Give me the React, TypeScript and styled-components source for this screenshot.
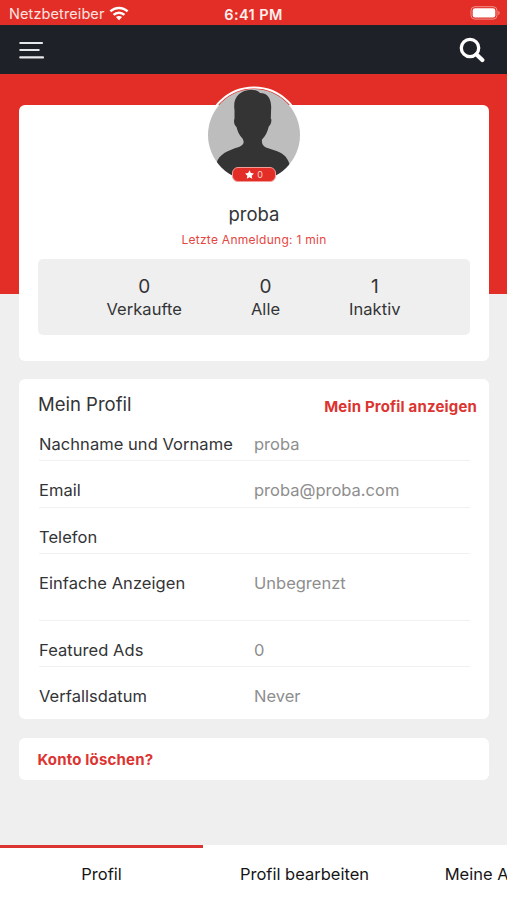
import React from "react";
import styled, { createGlobalStyle } from "styled-components";

const RED = "#e32e27";
const INK = "#333436";

const GlobalStyle = createGlobalStyle`
  * { box-sizing: border-box; }
  body { margin: 0; background: #efefef; }
`;

const Screen = styled.div`
  width: 507px;
  height: 900px;
  display: flex;
  flex-direction: column;
  overflow: hidden;
  background: #efefef;
  color: ${INK};
  font-family: Inter, "Liberation Sans", sans-serif;
`;

const Label = styled.span<{ $size: number; $spacing?: number; $weight?: number; $color?: string }>`
  font-size: ${(p) => p.$size}px;
  letter-spacing: ${(p) => p.$spacing ?? 0}px;
  font-weight: ${(p) => p.$weight ?? 400};
  color: ${(p) => p.$color ?? "inherit"};
  white-space: nowrap;
`;

const StatusBar = styled.header`
  flex: none;
  height: 25px;
  padding: 2px 6px 0 9px;
  display: grid;
  grid-template-columns: 1fr auto 1fr;
  align-items: center;
  background: ${RED};
`;

const Carrier = styled.div`
  display: flex;
  align-items: center;
  gap: 5px;
`;

const Clock = styled.div`
  margin-left: -3px;
`;

const BatterySlot = styled.div`
  display: flex;
  justify-content: flex-end;
  padding-bottom: 1px;
`;

const NavBar = styled.nav`
  flex: none;
  height: 49px;
  padding: 0 22px 0 18px;
  display: flex;
  align-items: center;
  justify-content: space-between;
  background: #1e2128;
`;

const IconButton = styled.button`
  display: flex;
  padding: 0;
  border: 0;
  background: none;
`;

const Content = styled.main`
  flex: 1;
  min-height: 0;
  padding: 31px 18px 0 19px;
  display: flex;
  flex-direction: column;
  background: linear-gradient(${RED} 0 220px, #efefef 220px);
`;

const Card = styled.section<{ $height: number; $gap: number }>`
  flex: none;
  height: ${(p) => p.$height}px;
  margin-bottom: ${(p) => p.$gap}px;
  border-radius: 6px;
  background: #fff;
`;

const Summary = styled(Card)`
  display: flex;
  flex-direction: column;
  align-items: center;
`;

const AvatarFrame = styled.div`
  position: relative;
  width: 98px;
  height: 98px;
  margin-top: -19px;
`;

const Badge = styled.div`
  position: absolute;
  left: 27px;
  top: 81px;
  width: 44px;
  height: 15px;
  display: flex;
  align-items: center;
  justify-content: center;
  gap: 3px;
  border: 1px solid #f29b97;
  border-radius: 6px;
  background: ${RED};
`;

const Name = styled.div`
  margin-top: 18px;
  height: 24px;
  line-height: 24px;
`;

const LastLogin = styled.div`
  margin-top: 4px;
  height: 16px;
  line-height: 16px;
`;

const Stats = styled.div`
  margin: 13px 1px 0 0;
  width: 432px;
  height: 76px;
  padding: 17px 69px 0;
  display: flex;
  justify-content: space-between;
  border-radius: 5px;
  background: #efefef;
`;

const Stat = styled.div`
  display: flex;
  flex-direction: column;
  align-items: center;
  line-height: 22px;
`;

const CardHeader = styled.div`
  height: 36px;
  padding: 14px 12px 0 19px;
  display: flex;
  justify-content: space-between;
  line-height: 22px;
`;

const HeaderLink = styled.a`
  padding-top: 2px;
`;

const Row = styled.div<{ $height: number; $last?: boolean }>`
  height: ${(p) => p.$height}px;
  margin: 0 19px 0 20px;
  padding-top: 18px;
  display: grid;
  grid-template-columns: 215px 1fr;
  line-height: 22px;
  border-bottom: ${(p) => (p.$last ? "0" : "1.5px solid #f1f1f1")};
`;

const DeleteCard = styled(Card)`
  display: flex;
  align-items: center;
  padding-left: 18.5px;
`;

const Tabs = styled.nav`
  flex: none;
  height: 55px;
  display: grid;
  grid-template-columns: repeat(3, 203px);
  background: #fff;
  color: #161616;
`;

const Tab = styled.button<{ $active?: boolean }>`
  padding: 0 0 1px;
  border: 0;
  border-top: 3px solid ${(p) => (p.$active ? "#dc3431" : "transparent")};
  background: none;
  color: inherit;
  font: inherit;
`;

const WifiIcon = () => (
  <svg width="20" height="15" viewBox="0 0 20 15" fill="none" stroke="#fff" strokeWidth="2.5">
    <path d="M1.4 5.4C6.2.7 13.8.7 18.6 5.4" />
    <path d="M4.6 8.8C7.6 5.9 12.4 5.9 15.4 8.8" />
    <path d="M6.9 11.1C8.6 9.5 11.4 9.5 13.1 11.1L10 14.3Z" fill="#fff" stroke="none" />
  </svg>
);

const BatteryIcon = () => (
  <svg width="31" height="14" viewBox="0 0 31 14">
    <rect x="1" y=".7" width="26" height="12.4" rx="3.8" fill="none" stroke="#f2918c" />
    <rect x="2.7" y="2.3" width="22.6" height="9.2" rx="2.3" fill="#fff" />
    <path d="M28.4 4.8Q31 7 28.4 9.2Z" fill="#f2918c" />
  </svg>
);

const MenuIcon = () => (
  <svg width="26" height="20" viewBox="0 0 26 20" stroke="#e6e8ec" strokeWidth="2.2" strokeLinecap="round">
    <path d="M2.3 3H24M2.3 10H20.7M2.3 17.4H25" />
  </svg>
);

const SearchIcon = () => (
  <svg width="26" height="26" viewBox="0 0 26 26" fill="none" stroke="#fff">
    <circle cx="11" cy="11" r="8.7" strokeWidth="3.3" />
    <path d="M17.5 17.5L23.3 23" strokeWidth="4.2" strokeLinecap="round" />
  </svg>
);

const Portrait = () => (
  <svg width="98" height="98" viewBox="0 0 98 98">
    <defs>
      <clipPath id="face"><circle cx="49" cy="49" r="46" /></clipPath>
      <clipPath id="arc"><rect width="98" height="20" /></clipPath>
    </defs>
    <g clipPath="url(#arc)">
      <circle cx="49" cy="49.5" r="48" fill="none" stroke="#fff" strokeWidth="2" />
    </g>
    <circle cx="49" cy="49" r="46" fill="#bdbdbd" />
    <path
      clipPath="url(#face)"
      fill="#343434"
      d="M29.5 24C27.500 11 35 4.500 46 3.800C50 3.800 53 4.500 55 7C63 7 66 13 66.200 21L65.800 32.500C67 33 66.300 39 63.800 40.500C62.500 46 60.500 50 57 53.500C56.500 57 57.500 60 61 61.500C66 63.500 71 64 76 67C81 70 83.500 74 85 80V98H10L11 80C12 70 20 66 28 63C33 61 37 60.500 38.300 57.500C39 56 38.500 54 37.500 52.500C34 49 32.500 45 31.500 41C29 39 28.500 35 29.500 32.500Z"
    />
  </svg>
);

const StarIcon = () => (
  <svg width="9" height="9" viewBox="0 0 24 24" fill="#fff">
    <path d="M12 .5l3.6 7.6 8.2 1.1-6 5.8 1.5 8.3L12 19.2l-7.3 4.1L6.200 15l-6-5.800 8.200-1.100z" />
  </svg>
);

const stats = [
  { value: "0", label: "Verkaufte" },
  { value: "0", label: "Alle" },
  { value: "1", label: "Inaktiv" },
];

const fields = [
  { label: "Nachname und Vorname", value: "proba", height: 46.4 },
  { label: "Email", value: "proba@proba.com", height: 46.4 },
  { label: "Telefon", value: "", height: 46.4 },
  { label: "Einfache Anzeigen", value: "Unbegrenzt", height: 67 },
  { label: "Featured Ads", value: "0", height: 46.2 },
  { label: "Verfallsdatum", value: "Never", height: 46.4 },
];

const tabs = ["Profil", "Profil bearbeiten", "Meine Anzeigen"];

export default function App() {
  return (
    <Screen>
      <GlobalStyle />
      <StatusBar>
        <Carrier>
          <Label $size={14.5} $spacing={0.1} $color="#ffe3e0">Netzbetreiber</Label>
          <WifiIcon />
        </Carrier>
        <Clock><Label $size={14.5} $spacing={0.4} $weight={600} $color="#fff0ee">6:41 PM</Label></Clock>
        <BatterySlot><BatteryIcon /></BatterySlot>
      </StatusBar>
      <NavBar>
        <IconButton aria-label="Menü"><MenuIcon /></IconButton>
        <IconButton aria-label="Suche"><SearchIcon /></IconButton>
      </NavBar>
      <Content>
        <Summary $height={256} $gap={18}>
          <AvatarFrame>
            <Portrait />
            <Badge>
              <StarIcon />
              <Label $size={9} $color="#ffd5d2">0</Label>
            </Badge>
          </AvatarFrame>
          <Name><Label $size={18.5}>proba</Label></Name>
          <LastLogin>
            <Label $size={12} $spacing={0.28} $color="#e5453f">Letzte Anmeldung: 1 min</Label>
          </LastLogin>
          <Stats>
            {stats.map((s) => (
              <Stat key={s.label}>
                <Label $size={19}>{s.value}</Label>
                <Label $size={16.5} $spacing={0.04}>{s.label}</Label>
              </Stat>
            ))}
          </Stats>
        </Summary>
        <Card $height={340} $gap={19}>
          <CardHeader>
            <Label $size={18.5}>Mein Profil</Label>
            <HeaderLink>
              <Label $size={15} $spacing={0.17} $weight={700} $color="#dc3431">Mein Profil anzeigen</Label>
            </HeaderLink>
          </CardHeader>
          {fields.map((f, i) => (
            <Row key={f.label} $height={f.height} $last={i === fields.length - 1}>
              <Label $size={16.5} $spacing={0.05}>{f.label}</Label>
              <Label $size={16.5} $color="#8e8e8e">{f.value}</Label>
            </Row>
          ))}
        </Card>
        <DeleteCard $height={42} $gap={0}>
          <Label $size={15} $spacing={0.17} $weight={700} $color="#dc3431">Konto löschen?</Label>
        </DeleteCard>
      </Content>
      <Tabs>
        {tabs.map((t, i) => (
          <Tab key={t} $active={i === 0}><Label $size={16.5}>{t}</Label></Tab>
        ))}
      </Tabs>
    </Screen>
  );
}
